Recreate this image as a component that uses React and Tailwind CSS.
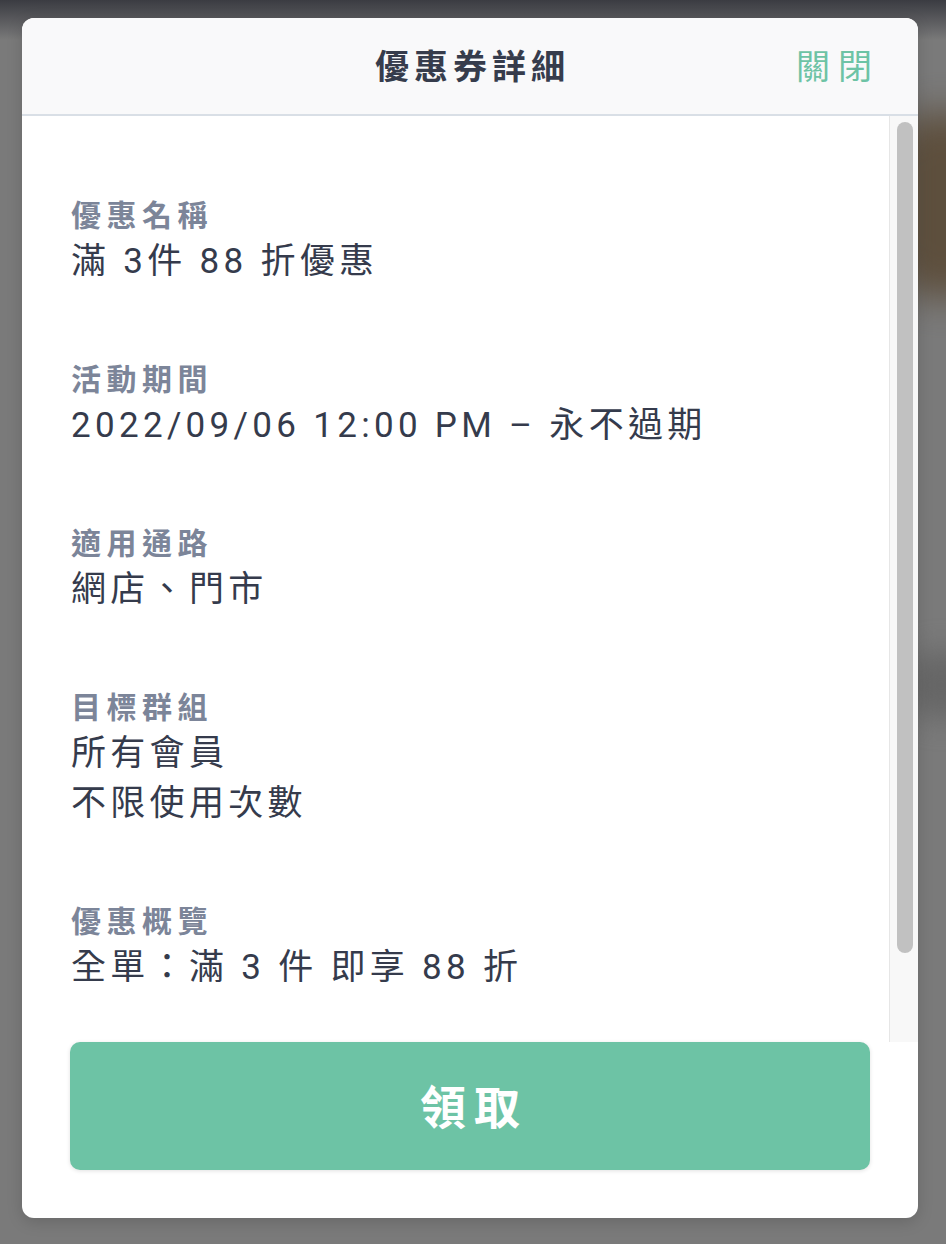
import React from "react";

const FONT = { fontFamily: '"Noto Sans", "Noto Sans CJK TC", sans-serif' };
const VALUE_FONT = { fontFamily: 'Roboto, "Noto Sans CJK TC", sans-serif' };

const items = [
  { label: "優惠名稱", values: ["滿 3件 88 折優惠"] },
  { label: "活動期間", values: ["2022/09/06 12:00 PM – 永不過期"] },
  { label: "適用通路", values: ["網店、門市"] },
  { label: "目標群組", values: ["所有會員", "不限使用次數"] },
  { label: "優惠概覽", values: ["全單：滿 3 件 即享 88 折"] },
];

export default function App() {
  return (
    <div
      className="relative w-[946px] h-[1244px] overflow-hidden bg-[#7a7a7a]"
      style={FONT}
    >
      {/* blurred backdrop */}
      <div className="absolute inset-x-0 top-0 h-[40px] bg-gradient-to-b from-[#3b3c42] to-[#7a7a7a]" />
      <div className="absolute right-[-40px] top-[110px] w-[90px] h-[190px] rounded-full bg-[#5a4a36] blur-[18px] opacity-90" />
      <div className="absolute right-[-30px] top-[650px] w-[70px] h-[70px] rounded-full bg-[#666] blur-[14px]" />

      {/* modal */}
      <div className="absolute left-[22px] top-[18px] w-[896px] h-[1200px] bg-white rounded-[12px] overflow-hidden flex flex-col shadow-[0_4px_16px_rgba(0,0,0,0.15)]">
        {/* header */}
        <div className="h-[98px] shrink-0 bg-[#f9f9fa] border-b-2 border-[#d9dfe6] grid grid-cols-[1fr_auto_1fr] items-center">
          <div />
          <div className="text-[34px] font-bold text-[#363c4c] tracking-[5px] pl-[5px] leading-none">
            優惠券詳細
          </div>
          <div className="justify-self-end pr-[38px] text-[34px] text-[#6dc3a5] tracking-[8px] leading-none">
            關閉
          </div>
        </div>

        {/* scroll body */}
        <div className="h-[926px] shrink-0 flex">
          <div className="flex-1 overflow-hidden">
            <div className="pl-[49px] pt-[77px] pb-[144px] flex flex-col gap-[70px]">
              {items.map((it) => (
                <div key={it.label} className="flex flex-col">
                  <div className="text-[30px] leading-[44px] font-bold text-[#7c8599] tracking-[5.5px]">
                    {it.label}
                  </div>
                  {it.values.map((v) => (
                    <div
                      key={v}
                      style={VALUE_FONT}
                      className="text-[35px] leading-[50px] text-[#353b4c] tracking-[4.3px] whitespace-nowrap"
                    >
                      {v}
                    </div>
                  ))}
                </div>
              ))}
            </div>
          </div>
          {/* scrollbar */}
          <div className="w-[29px] shrink-0 bg-[#f8f8f8] border-l border-[#e6e6e6] pt-[6px] pl-[7px]">
            <div className="w-[16px] h-[831px] rounded-full bg-[#c1c1c1]" />
          </div>
        </div>

        {/* footer */}
        <div className="px-[48px] pb-[48px]">
          <button className="w-full h-[128px] rounded-[10px] bg-[#6dc3a5] shadow-[0_1px_4px_rgba(0,0,0,0.12)] text-white text-[46px] font-bold tracking-[8px] pl-[8px]">
            領取
          </button>
        </div>
      </div>
    </div>
  );
}
